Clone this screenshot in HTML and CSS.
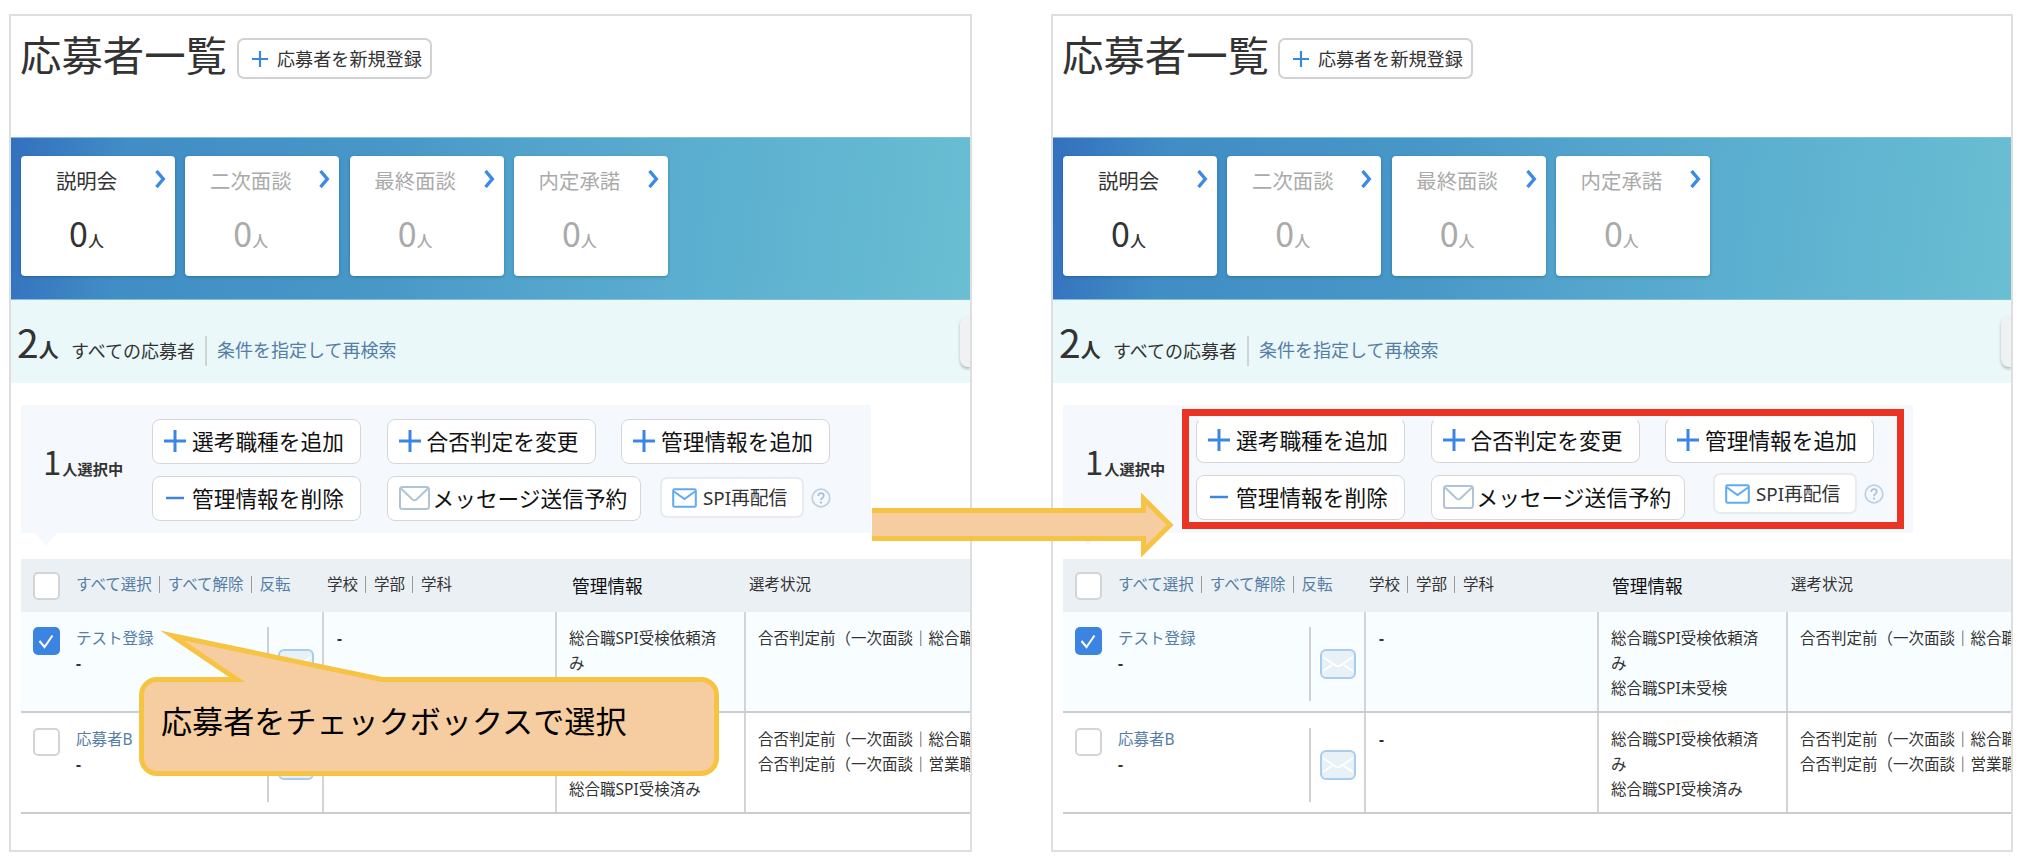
FILE: index.html
```
<!DOCTYPE html>
<html lang="ja">
<head>
    <meta charset="UTF-8">
    <meta name="viewport" content="width=device-width, initial-scale=1.0">
    <title>応募者一覧</title>
    <link rel="stylesheet" href="styles.css">
</head>
<body>
<svg class="defs" width="0" height="0">
    <symbol id="plus" viewBox="0 0 22 22"><path d="M11 0v22M0 11h22" fill="none" stroke="#3b86e3" stroke-width="3"/></symbol>
    <symbol id="minus" viewBox="0 0 22 22"><path d="M2 11h18" fill="none" stroke="#3b86e3" stroke-width="2.500"/></symbol>
    <symbol id="arrow" viewBox="0 0 11 18"><path d="M1.500 1l6.800 8-6.800 8" fill="none" stroke="#3b8ae6" stroke-width="3.400"/></symbol>
    <symbol id="mail" viewBox="0 0 31 24"><rect x="1" y="1" width="29" height="22" rx="2.500" fill="#fff" stroke="currentColor" stroke-width="2"/><path d="M2 2.500l11.500 11q2 1.600 4 0L29 2.500" fill="none" stroke="currentColor" stroke-width="2"/></symbol>
    <symbol id="mail-spi" viewBox="0 0 25 20"><rect x="1.200" y="1.200" width="22.600" height="17.600" rx="1.500" fill="#fff" stroke="#5fabf0" stroke-width="2"/><path d="M2 3.500l10.500 7.500L23 3.500" fill="none" stroke="#5fabf0" stroke-width="2"/></symbol>
    <symbol id="mail-row" viewBox="0 0 36 30"><rect x="1" y="1" width="34" height="28" rx="5" fill="#e8f1f7" stroke="#a9cdec" stroke-width="2"/><path d="M3 8l12.500 8.500q2.500 1.600 5 0L33 8M3 22l9-6M33 22l-9-6" fill="none" stroke="#fff" stroke-width="2"/></symbol>
    <symbol id="help" viewBox="0 0 20 20"><circle cx="10" cy="10" r="8.800" fill="none" stroke="#bcd0e2" stroke-width="1.700"/><path d="M7.200 8q0-2.800 2.800-2.800T12.800 7.800q0 1.300-1.500 2.200-1.300.8-1.300 2.200" fill="none" stroke="#a9c1d8" stroke-width="1.700"/><circle cx="10" cy="14.600" r="1.100" fill="#a9c1d8"/></symbol>
    <symbol id="check" viewBox="0 0 26 28"><path d="M6.500 14l5 6L19.500 8.500" fill="none" stroke="#fff" stroke-width="2"/></symbol>
</svg>

<div class="container">
    <!-- 選択前 -->
    <div class="panel">
        <div class="title">
            <h1>応募者一覧</h1>
            <span class="btn-new"><svg><use href="#plus"/></svg>応募者を新規登録</span>
        </div>
        <div class="steps">
            <div class="card on"><p>説明会</p><b>0<i>人</i></b><svg><use href="#arrow"/></svg></div>
            <div class="card"><p>二次面談</p><b>0<i>人</i></b><svg><use href="#arrow"/></svg></div>
            <div class="card"><p>最終面談</p><b>0<i>人</i></b><svg><use href="#arrow"/></svg></div>
            <div class="card"><p>内定承諾</p><b>0<i>人</i></b><svg><use href="#arrow"/></svg></div>
        </div>
        <div class="search">
            <span class="total">2<i>人</i></span>
            <span class="all">すべての応募者</span>
            <a class="link">条件を指定して再検索</a>
            <span class="cut-btn"></span>
        </div>
        <div class="actions">
            <div class="selected">1<i>人選択中</i></div>
            <div class="btns">
                <div class="btn-row">
                    <span class="btn"><svg><use href="#plus"/></svg>選考職種を追加</span>
                    <span class="btn"><svg><use href="#plus"/></svg>合否判定を変更</span>
                    <span class="btn"><svg><use href="#plus"/></svg>管理情報を追加</span>
                </div>
                <div class="btn-row">
                    <span class="btn"><svg><use href="#minus"/></svg>管理情報を削除</span>
                    <span class="btn wide"><svg class="mail"><use href="#mail"/></svg>メッセージ送信予約</span>
                    <span class="btn-spi"><svg><use href="#mail-spi"/></svg>SPI再配信</span>
                    <svg class="help"><use href="#help"/></svg>
                </div>
            </div>
        </div>
        <div class="table">
            <div class="tr head">
                <div class="td c1"><span class="box"></span><div class="links"><a>すべて選択</a><a>すべて解除</a><a>反転</a></div></div>
                <div class="td c2"><span>学校</span><span>学部</span><span>学科</span></div>
                <div class="td c3">管理情報</div>
                <div class="td c4">選考状況</div>
            </div>
            <div class="tr checked">
                <div class="td c1"><span class="box"><svg><use href="#check"/></svg></span><div class="name"><a>テスト登録</a><br><b>-</b></div><div class="mail-cell"><svg><use href="#mail-row"/></svg></div></div>
                <div class="td c2"><b>-</b></div>
                <div class="td c3">総合職SPI受検依頼済み<br>総合職SPI未受検</div>
                <div class="td c4">合否判定前（一次面談｜総合職）</div>
            </div>
            <div class="tr">
                <div class="td c1"><span class="box"></span><div class="name"><a>応募者B</a><br><b>-</b></div><div class="mail-cell"><svg><use href="#mail-row"/></svg></div></div>
                <div class="td c2"><b>-</b></div>
                <div class="td c3">総合職SPI受検依頼済み<br>総合職SPI受検済み</div>
                <div class="td c4">合否判定前（一次面談｜総合職）<br>合否判定前（一次面談｜営業職）</div>
            </div>
        </div>
    </div>

    <!-- 選択後 -->
    <div class="panel after">
        <div class="title">
            <h1>応募者一覧</h1>
            <span class="btn-new"><svg><use href="#plus"/></svg>応募者を新規登録</span>
        </div>
        <div class="steps">
            <div class="card on"><p>説明会</p><b>0<i>人</i></b><svg><use href="#arrow"/></svg></div>
            <div class="card"><p>二次面談</p><b>0<i>人</i></b><svg><use href="#arrow"/></svg></div>
            <div class="card"><p>最終面談</p><b>0<i>人</i></b><svg><use href="#arrow"/></svg></div>
            <div class="card"><p>内定承諾</p><b>0<i>人</i></b><svg><use href="#arrow"/></svg></div>
        </div>
        <div class="search">
            <span class="total">2<i>人</i></span>
            <span class="all">すべての応募者</span>
            <a class="link">条件を指定して再検索</a>
            <span class="cut-btn"></span>
        </div>
        <div class="actions">
            <div class="selected">1<i>人選択中</i></div>
            <div class="btns">
                <div class="btn-row">
                    <span class="btn"><svg><use href="#plus"/></svg>選考職種を追加</span>
                    <span class="btn"><svg><use href="#plus"/></svg>合否判定を変更</span>
                    <span class="btn"><svg><use href="#plus"/></svg>管理情報を追加</span>
                </div>
                <div class="btn-row">
                    <span class="btn"><svg><use href="#minus"/></svg>管理情報を削除</span>
                    <span class="btn wide"><svg class="mail"><use href="#mail"/></svg>メッセージ送信予約</span>
                    <span class="btn-spi"><svg><use href="#mail-spi"/></svg>SPI再配信</span>
                    <svg class="help"><use href="#help"/></svg>
                </div>
            </div>
            <div class="red-frame"></div>
        </div>
        <div class="table">
            <div class="tr head">
                <div class="td c1"><span class="box"></span><div class="links"><a>すべて選択</a><a>すべて解除</a><a>反転</a></div></div>
                <div class="td c2"><span>学校</span><span>学部</span><span>学科</span></div>
                <div class="td c3">管理情報</div>
                <div class="td c4">選考状況</div>
            </div>
            <div class="tr checked">
                <div class="td c1"><span class="box"><svg><use href="#check"/></svg></span><div class="name"><a>テスト登録</a><br><b>-</b></div><div class="mail-cell"><svg><use href="#mail-row"/></svg></div></div>
                <div class="td c2"><b>-</b></div>
                <div class="td c3">総合職SPI受検依頼済み<br>総合職SPI未受検</div>
                <div class="td c4">合否判定前（一次面談｜総合職）</div>
            </div>
            <div class="tr">
                <div class="td c1"><span class="box"></span><div class="name"><a>応募者B</a><br><b>-</b></div><div class="mail-cell"><svg><use href="#mail-row"/></svg></div></div>
                <div class="td c2"><b>-</b></div>
                <div class="td c3">総合職SPI受検依頼済み<br>総合職SPI受検済み</div>
                <div class="td c4">合否判定前（一次面談｜総合職）<br>合否判定前（一次面談｜営業職）</div>
            </div>
        </div>
    </div>
</div>

<!-- 吹き出し -->
<div class="callout">
    <svg viewBox="0 0 580 147" width="580" height="147"><path d="M18 49.500H98L33 5.500L243 49.500H562a15.500 15.500 0 0 1 15.500 15.500V128a15.500 15.500 0 0 1-15.500 15.500H18A15.500 15.500 0 0 1 2.500 128V65A15.500 15.500 0 0 1 18 49.500z" fill="#f6cda0" stroke="#f6c343" stroke-width="5" stroke-miterlimit="8"/></svg>
    <p>応募者をチェックボックスで選択</p>
</div>
<!-- 矢印 -->
<svg class="big-arrow" viewBox="0 0 302 66"><path d="M-10 18.500H271.500V6.500L298 33L271.500 59.500V46.500H-10z" fill="#f6cda0" stroke="#f6c343" stroke-width="5"/></svg>
</body>
</html>
```
FILE: styles.css
```
*{
    margin: 0;
    padding: 0;
    box-sizing: border-box;
}
body{
    width: 2024px;
    height: 868px;
    overflow: hidden;
    position: relative;
    background: #fff;
    color: #333;
    font-family: "Noto Sans", "Noto Sans CJK JP", sans-serif;
    white-space: nowrap;
}
i{
    font-style: normal;
}
svg{
    display: block;
    flex: none;
}
.defs{
    position: absolute;
}
.container{
    display: flex;
    gap: 79px;
    padding: 14px 0 0 9px;
}
.panel{
    width: 963px;
    height: 838px;
    border: 2px solid #dedede;
    overflow: hidden;
}
.after{
    width: 962px;
}
/* タイトル */
.title{
    display: flex;
    height: 121px;
    padding: 14px 0 0 9px;
}
.title h1{
    width: 217px;
    font-size: 41.4px;
    font-weight: normal;
    line-height: 51px;
}
.btn-new{
    display: flex;
    align-items: center;
    width: 195px;
    height: 41px;
    margin-top: 8px;
    padding: 0 0 2px 13px;
    border: 2px solid #d2d2d2;
    border-radius: 7px;
    font-size: 18.1px;
}
.btn-new svg{
    width: 16px;
    height: 16px;
    margin: 2px 9px 0 0;
}
.after .btn-new{
    margin-left: -1px;
}
/* 選考ステップ */
.steps{
    display: flex;
    gap: 10.300px;
    height: 163px;
    padding: 18px 0 0 10px;
    border-top: 1px solid #7fc0dc;
    border-bottom: 1px solid #7fc0dc;
    background: linear-gradient(97deg, #3370bf 0%, #418dc5 12%, #4797c7 38%, #53a5cd 56%, #5db1d0 75%, #69bed2 100%);
}
.card{
    display: grid;
    grid-template-columns: 131px 11px;
    grid-template-rows: 50px 50px;
    width: 154px;
    height: 120px;
    border-radius: 4px;
    background: #fff;
    box-shadow: 0 1px 3px rgba(0,60,80,0.35);
    color: #aaa;
    text-align: center;
}
.card.on{
    color: #333;
}
.card p{
    font-size: 20.4px;
    line-height: 51px;
}
.card b{
    grid-row: 2;
    font-family: "Noto Sans CJK JP", sans-serif;
    font-size: 34px;
    font-weight: normal;
    line-height: 54px;
}
.card b i{
    font-size: 16px;
    font-weight: 500;
}
.card svg{
    grid-column: 2;
    grid-row: 1;
    width: 11px;
    height: 18px;
    margin: 14px 0 0 3px;
}
/* 検索 */
.search{
    display: flex;
    height: 83px;
    padding-left: 6px;
    background: #eaf8fa;
    font-size: 18px;
    line-height: 30px;
}
.total{
    width: 54px;
    font-family: "Noto Sans CJK JP", sans-serif;
    font-size: 39px;
    line-height: 83px;
}
.total i{
    font-size: 20px;
    font-weight: bold;
}
.all{
    height: 30px;
    width: 136px;
    margin-top: 36px;
    border-right: 2px solid #ccd4d6;
    line-height: 30px;
}
.link{
    margin: 35px auto 0 10px;
}
a{
    color: #557da5;
}
.cut-btn{
    width: 10px;
    height: 51px;
    margin-top: 16px;
    border-radius: 8px 0 0 8px;
    background: #f0f1f4;
    box-shadow: 0 2px 3px rgba(0,0,0,0.25);
}
/* 一括操作 */
.actions{
    display: flex;
    position: relative;
    width: 850px;
    height: 128px;
    margin: 22px 0 26px 10px;
    background: #f5f9fe;
}
.actions::after{
    content: "";
    position: absolute;
    left: 14px;
    top: 128px;
    border: 11px solid transparent;
    border-top: 13px solid #f5f9fe;
    border-bottom: 0;
}
.selected{
    width: 131px;
    padding-left: 22px;
    font-family: "Noto Sans CJK JP", sans-serif;
    font-size: 33px;
    line-height: 113px;
}
.selected i{
    margin-left: 1px;
    font-size: 15.2px;
    font-weight: bold;
}
.btns{
    padding-top: 14px;
}
.btn-row{
    display: flex;
    gap: 25.500px;
    height: 57px;
}
.btn{
    display: flex;
    align-items: center;
    width: 209px;
    height: 45px;
    padding: 0 0 2px 11px;
    border: 1px solid #d6d6d8;
    border-radius: 8px;
    background: #fff;
    color: #111;
    font-size: 21.7px;
}
.btn svg{
    width: 22px;
    height: 22px;
    margin-right: 6px;
}
.btn .mail{
    width: 31px;
    height: 24px;
    margin-right: 3px;
    color: #b0c4d8;
}
.wide{
    width: 254px;
}
.btn-spi{
    display: flex;
    align-items: center;
    width: 144px;
    height: 41px;
    margin: 1px 0 0 -6px;
    padding: 0 0 2px 10px;
    border: 2px solid #e9ebee;
    border-radius: 7px;
    background: #fff;
    font-size: 18.8px;
}
.btn-spi svg{
    width: 25px;
    height: 20px;
    margin: 2px 6px 0 0;
}
.help{
    width: 20px;
    height: 20px;
    margin: 12px 0 0 -19px;
}
.after .btns{
    padding: 13px 0 0 2px;
}
.after .btn-row:first-child .btn{
    border-top-color: #fff;
}
.after .btn-spi{
    margin: -2px 0 0 3px;
}
.after .help{
    margin-top: 9px;
}
.red-frame{
    position: absolute;
    left: 119px;
    top: 4px;
    width: 722px;
    height: 120px;
    border: 7px solid #ea3323;
}
/* 一覧 */
.table{
    margin-left: 10px;
    font-size: 15.500px;
    line-height: 24.800px;
}
.tr{
    display: flex;
    height: 101px;
    border-bottom: 2px solid #ccc;
}
.head{
    height: 53px;
    border: 0;
    background: #ebf0f4;
}
.checked{
    background: #f8fdff;
}
.td{
    flex: none;
    padding-top: 14px;
    border-right: 2px solid #d4d4d4;
}
.head .td{
    border-color: transparent;
    padding-top: 13px;
}
.c1{
    display: flex;
    width: 303px;
}
.c2{
    width: 233px;
    padding-left: 13px;
}
.c3{
    width: 189px;
    padding-left: 12px;
    padding-right: 20px;
    white-space: normal;
}
.c4{
    padding-left: 12px;
}
.box{
    width: 27px;
    height: 28px;
    margin: 1px 16px 0 12px;
    border: 2px solid #d4d4d4;
    border-radius: 5px;
    background: #fff;
}
.head .box{
    margin-top: 0;
}
.checked .box{
    border: 0;
    background: #3b84e2;
}
.box svg{
    width: 26px;
    height: 28px;
}
.name{
    width: 191px;
}
.mail-cell{
    height: 74px;
    margin-top: 1px;
    padding: 22px 0 0 9px;
    border-left: 2px solid #d0d0d0;
}
.mail-cell svg{
    width: 36px;
    height: 30px;
}
.links a + a,
.c2 span + span{
    margin-left: 7px;
    padding-left: 8px;
    border-left: 1px solid #999;
}
.links a,
.c2 span{
    display: inline-block;
    line-height: 17px;
}
.head .c2{
    padding-left: 3px;
}
.head .c3{
    padding: 15px 0 0 15px;
    color: #111;
    font-size: 17.700px;
}
.after .head .c3{
    padding-left: 13px;
}
.head .c4{
    padding-left: 3px;
}
/* 吹き出しと矢印は画面の上に重ねる */
.callout{
    position: absolute;
    left: 139px;
    top: 630px;
    width: 580px;
    height: 147px;
}
.callout p{
    position: absolute;
    left: 22px;
    top: 70px;
    color: #000;
    font-size: 31.1px;
    line-height: 43px;
}
.big-arrow{
    position: absolute;
    left: 872px;
    top: 492px;
    width: 302px;
    height: 66px;
}
```
